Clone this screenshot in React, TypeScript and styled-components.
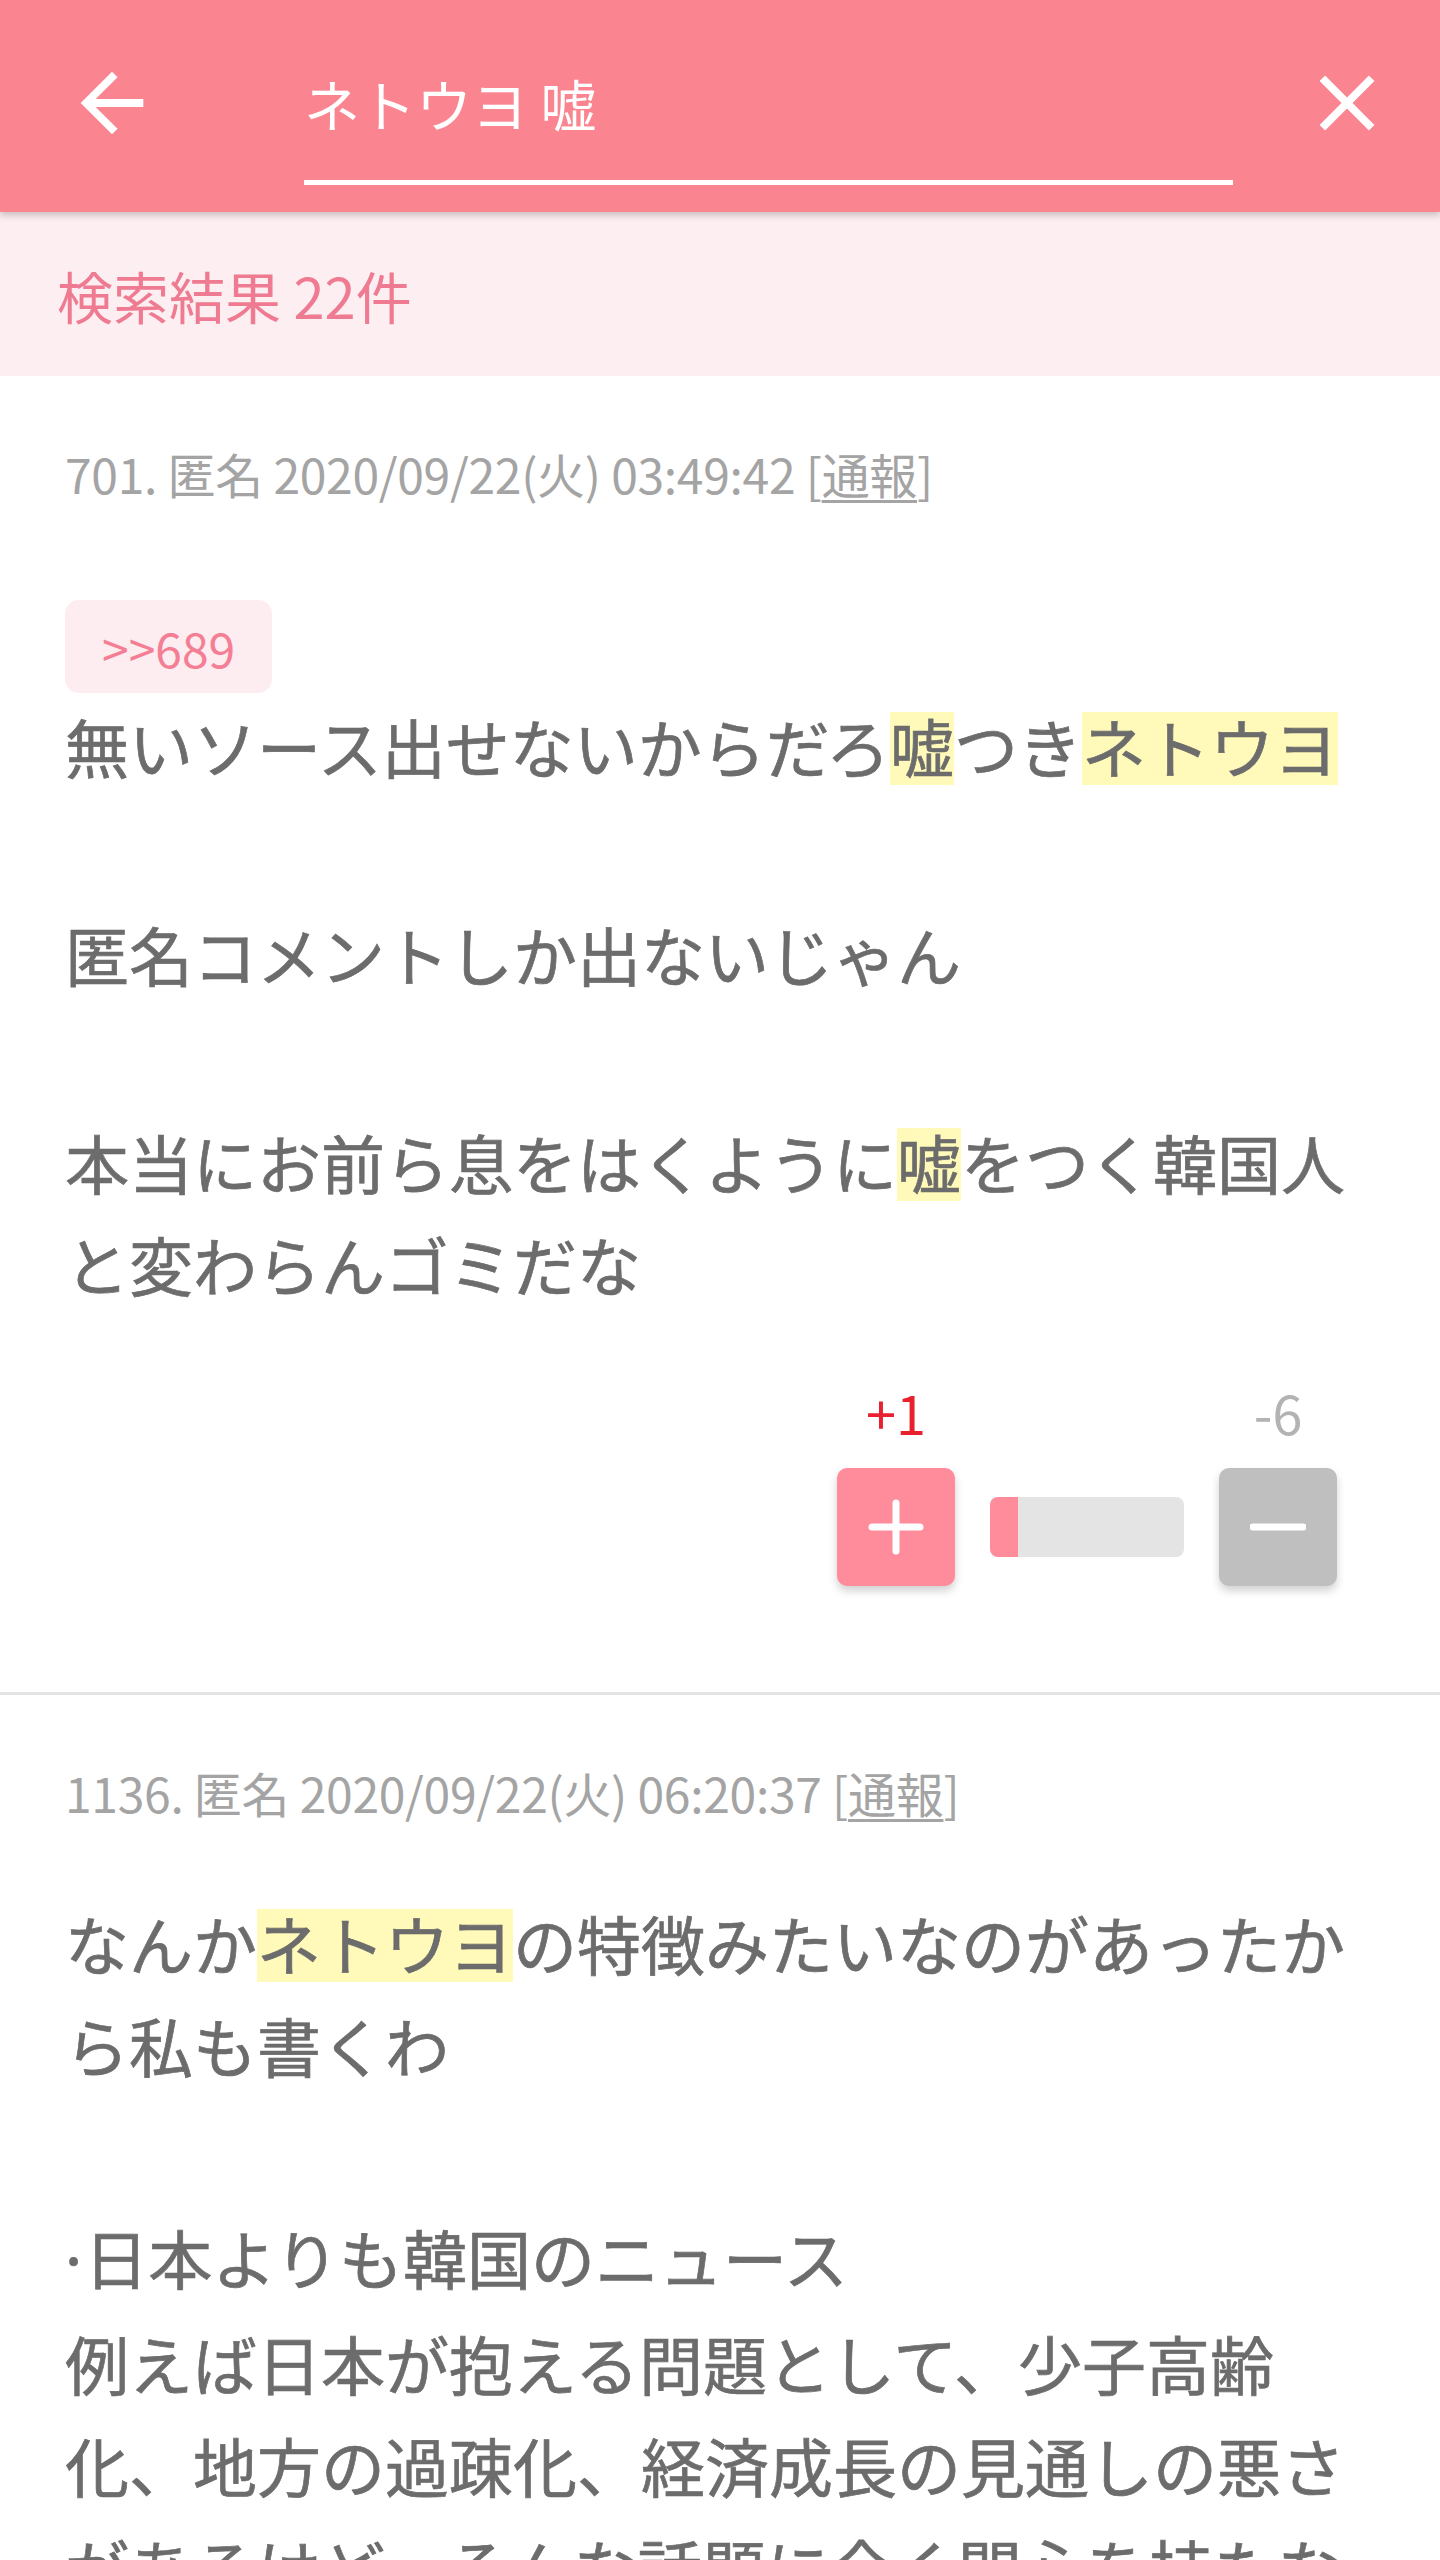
import React from "react";
import styled, { createGlobalStyle } from "styled-components";

const GlobalStyle = createGlobalStyle`
  html, body { margin: 0; padding: 0; background: #ffffff; }
  body {
    font-family: "Noto Sans CJK JP", "Noto Sans", sans-serif;
    -webkit-font-smoothing: antialiased;
  }
  * { box-sizing: border-box; }
`;

const Page = styled.div`
  width: 1440px;
  min-height: 2560px;
  background: #ffffff;
  overflow: hidden;
`;

const Header = styled.header`
  position: relative;
  z-index: 2;
  height: 212px;
  background: #fa8590;
  box-shadow: 0 3px 7px rgba(0, 0, 0, 0.22);
  display: flex;
  align-items: flex-start;
  padding: 56px 46px 0 65px;
`;

const IconButton = styled.button`
  flex: none;
  width: 94px;
  height: 94px;
  padding: 0;
  border: 0;
  background: transparent;
  color: #ffffff;
  display: flex;
  align-items: center;
  justify-content: center;
  svg {
    width: 94px;
    height: 94px;
    display: block;
  }
`;

const SearchField = styled.div`
  flex: 1;
  margin: 0 67px 0 145px;
  display: flex;
  flex-direction: column;
`;

const SearchText = styled.div`
  height: 94px;
  font-size: 56px;
  line-height: 94px;
  color: #ffffff;
  white-space: nowrap;
`;

const SearchUnderline = styled.div`
  margin-top: 30px;
  height: 5px;
  background: #ffffff;
`;

const ResultsBar = styled.div`
  position: relative;
  z-index: 1;
  height: 164px;
  background: #fdeef1;
  padding-left: 57px;
  display: flex;
  align-items: center;
  font-size: 56px;
  color: #ef7b92;
`;

const Post = styled.article`
  display: flex;
  flex-direction: column;
  padding: 62px 65px 106px;
  border-bottom: 3px solid #e3e3e3;
`;

const Meta = styled.div`
  font-size: 48px;
  line-height: 70px;
  letter-spacing: -0.3px;
  color: #a4a4a4;
  white-space: nowrap;
`;

const Report = styled.span`
  text-decoration: underline;
  text-underline-offset: 6px;
  text-decoration-thickness: 3px;
`;

const QuoteBadge = styled.div`
  align-self: flex-start;
  margin-top: 92px;
  height: 93px;
  padding: 0 37px;
  border-radius: 14px;
  background: #fdecf0;
  color: #f47f95;
  font-size: 48px;
  display: flex;
  align-items: center;
`;

const Body = styled.div<{ $afterQuote?: boolean }>`
  margin-top: ${(p) => (p.$afterQuote ? 1 : 64)}px;
  display: flex;
  flex-direction: column;
  gap: ${(p) => (p.$afterQuote ? 106 : 110)}px;
  font-size: 64px;
  line-height: 102px;
  color: #6c6c6c;
  -webkit-text-stroke: 0.7px #6c6c6c;
`;

const Para = styled.div`
  line-break: strict;
`;

const Line = styled.div``;

const Bullet = styled.span`
  font-family: "Noto Sans", sans-serif;
  margin-right: 2px;
`;

const Mark = styled.span`
  background: linear-gradient(
    to bottom,
    transparent 14%,
    #fffab9 14%,
    #fffab9 93%,
    transparent 93%
  );
`;

const VoteRow = styled.div`
  margin-top: 63px;
  padding-right: 38px;
  display: flex;
  justify-content: flex-end;
`;

const VoteGrid = styled.div`
  display: grid;
  grid-template-columns: 118px 194px 118px;
  column-gap: 35px;
  row-gap: 21px;
  align-items: center;
`;

const Count = styled.div<{ $col: number; $color: string }>`
  grid-column: ${(p) => p.$col};
  grid-row: 1;
  font-size: 54px;
  line-height: 70px;
  text-align: center;
  color: ${(p) => p.$color};
`;

const VoteButton = styled.button<{ $col: number; $bg: string }>`
  grid-column: ${(p) => p.$col};
  grid-row: 2;
  width: 118px;
  height: 118px;
  padding: 0;
  border: 0;
  border-radius: 10px;
  background: ${(p) => p.$bg};
  box-shadow: 0 5px 8px rgba(0, 0, 0, 0.18);
  display: flex;
  align-items: center;
  justify-content: center;
  svg {
    width: 56px;
    height: 56px;
    display: block;
  }
`;

const Meter = styled.div`
  grid-column: 2;
  grid-row: 2;
  height: 60px;
  border-radius: 8px;
  background: #e4e4e4;
  overflow: hidden;
  display: flex;
`;

const MeterFill = styled.div`
  height: 100%;
  background: #ff8c9b;
`;

const BackIcon = () => (
  <svg viewBox="0 0 24 24" fill="currentColor">
    <path d="M20 11H7.83l5.59-5.59L12 4l-8 8 8 8 1.41-1.41L7.83 13H20v-2z" />
  </svg>
);

const CloseIcon = () => (
  <svg viewBox="0 0 24 24" fill="currentColor">
    <path d="M19 6.41L17.59 5 12 10.59 6.41 5 5 6.41 10.59 12 5 17.59 6.41 19 12 13.41 17.59 19 19 17.59 13.41 12z" />
  </svg>
);

const PlusIcon = () => (
  <svg viewBox="0 0 56 56" fill="none" stroke="#ffffff" strokeWidth="7" strokeLinecap="round">
    <line x1="4" y1="28" x2="52" y2="28" />
    <line x1="28" y1="4" x2="28" y2="52" />
  </svg>
);

const MinusIcon = () => (
  <svg viewBox="0 0 56 56" fill="none" stroke="#ffffff" strokeWidth="7" strokeLinecap="round">
    <line x1="3" y1="28" x2="53" y2="28" />
  </svg>
);

const KEYWORDS = /(ネトウヨ|嘘)/;

const highlight = (text: string) =>
  text.split(KEYWORDS).map((part, i) =>
    i % 2 === 1 ? <Mark key={i}>{part}</Mark> : <React.Fragment key={i}>{part}</React.Fragment>
  );

const renderLine = (line: string) =>
  line.startsWith("·") ? (
    <>
      <Bullet>·</Bullet>
      {highlight(line.slice(1))}
    </>
  ) : (
    highlight(line)
  );

type PostData = {
  no: number;
  date: string;
  quote?: string;
  paragraphs: string[][];
  up?: number;
  down?: number;
};

const posts: PostData[] = [
  {
    no: 701,
    date: "2020/09/22(火) 03:49:42",
    quote: ">>689",
    paragraphs: [
      ["無いソース出せないからだろ嘘つきネトウヨ"],
      ["匿名コメントしか出ないじゃん"],
      ["本当にお前ら息をはくように嘘をつく韓国人と変わらんゴミだな"],
    ],
    up: 1,
    down: 6,
  },
  {
    no: 1136,
    date: "2020/09/22(火) 06:20:37",
    paragraphs: [
      ["なんかネトウヨの特徴みたいなのがあったから私も書くわ"],
      [
        "·日本よりも韓国のニュース",
        "例えば日本が抱える問題として、少子高齢化、地方の過疎化、経済成長の見通しの悪さがあるけど、そんな話題に全く関心を持たない",
      ],
    ],
  },
];

const Votes = ({ up, down }: { up: number; down: number }) => {
  const ratio = up + down > 0 ? (up / (up + down)) * 100 : 0;
  return (
    <VoteRow>
      <VoteGrid>
        <Count $col={1} $color="#e8212f">+{up}</Count>
        <Count $col={3} $color="#b3b3b3">-{down}</Count>
        <VoteButton $col={1} $bg="#ff8c9b" aria-label="plus">
          <PlusIcon />
        </VoteButton>
        <Meter>
          <MeterFill style={{ width: `${ratio}%` }} />
        </Meter>
        <VoteButton $col={3} $bg="#bfbfbf" aria-label="minus">
          <MinusIcon />
        </VoteButton>
      </VoteGrid>
    </VoteRow>
  );
};

export default function App() {
  return (
    <Page>
      <GlobalStyle />
      <Header>
        <IconButton aria-label="back">
          <BackIcon />
        </IconButton>
        <SearchField>
          <SearchText>ネトウヨ 嘘</SearchText>
          <SearchUnderline />
        </SearchField>
        <IconButton aria-label="clear">
          <CloseIcon />
        </IconButton>
      </Header>
      <ResultsBar>検索結果 22件</ResultsBar>
      {posts.map((post) => (
        <Post key={post.no}>
          <Meta>
            {post.no}. 匿名 {post.date} [<Report>通報</Report>]
          </Meta>
          {post.quote && <QuoteBadge>{post.quote}</QuoteBadge>}
          <Body $afterQuote={!!post.quote}>
            {post.paragraphs.map((lines, i) => (
              <Para key={i}>
                {lines.map((line, j) => (
                  <Line key={j}>{renderLine(line)}</Line>
                ))}
              </Para>
            ))}
          </Body>
          {post.up !== undefined && post.down !== undefined && (
            <Votes up={post.up} down={post.down} />
          )}
        </Post>
      ))}
    </Page>
  );
}
